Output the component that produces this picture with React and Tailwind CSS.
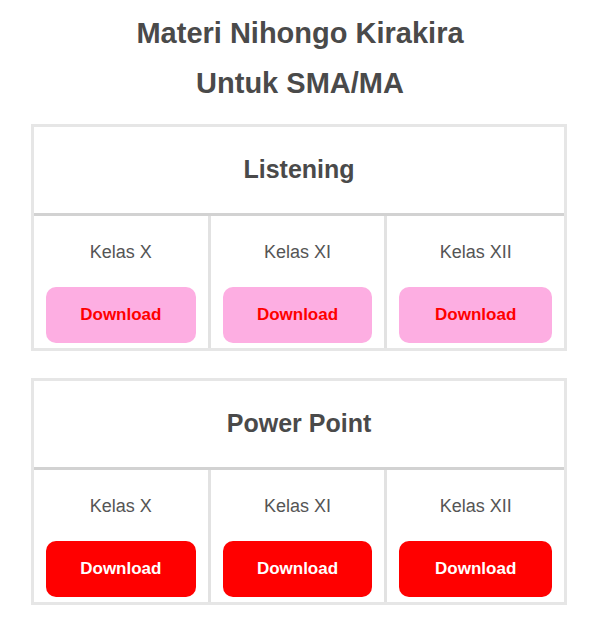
import React from 'react'

const kelas = ['Kelas X', 'Kelas XI', 'Kelas XII']

function MateriTable({ title, variant }) {
  const btn =
    variant === 'pink'
      ? 'bg-[#fdaee2] text-[#ff0000]'
      : 'bg-[#ff0000] text-white'

  return (
    <div className="ml-[31px] w-[536px] border-[3px] border-[#e6e6e6]">
      <div className="h-[89px] flex items-center justify-center border-b-[3px] border-[#d2d2d2]">
        <h3 className="text-[25px] font-bold text-[#4a4a4a]">{title}</h3>
      </div>
      <div className="grid grid-cols-3">
        {kelas.map((k, i) => (
          <div
            key={k}
            className={
              i < 2
                ? 'flex flex-col items-center pt-[24px] pb-[5px] px-[12px] border-r-[3px] border-[#e2e2e2]'
                : 'flex flex-col items-center pt-[24px] pb-[5px] px-[12px]'
            }
          >
            <p className="text-[18px] leading-[24px] text-[#555555]">{k}</p>
            <a
              href="#"
              className={`mt-[23px] w-full h-[56px] rounded-[10px] flex items-center justify-center text-[17px] font-bold ${btn}`}
            >
              Download
            </a>
          </div>
        ))}
      </div>
    </div>
  )
}

export default function App() {
  return (
    <div className="w-[600px] min-h-[622px] bg-white pt-[8px] font-['Liberation_Sans',Arial,sans-serif]">
      <h2 className="text-center text-[29px] font-bold leading-[50px] text-[#4a4a4a]">
        Materi Nihongo Kirakira
        <br />
        Untuk SMA/MA
      </h2>
      <div className="mt-[16px]">
        <MateriTable title="Listening" variant="pink" />
      </div>
      <div className="mt-[27px]">
        <MateriTable title="Power Point" variant="red" />
      </div>
    </div>
  )
}
